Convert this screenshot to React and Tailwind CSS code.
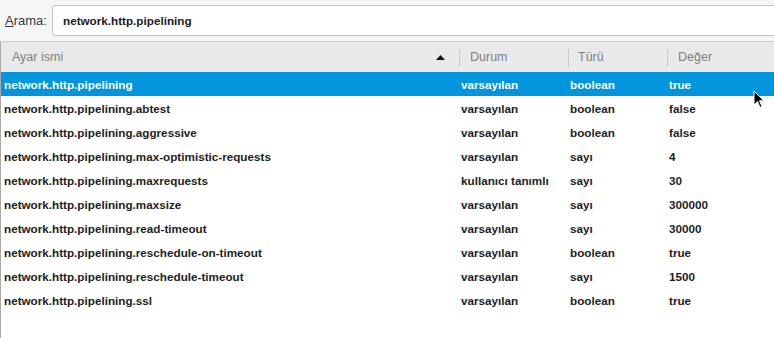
import React from "react";

const rows = [
  ["network.http.pipelining", "varsayılan", "boolean", "true"],
  ["network.http.pipelining.abtest", "varsayılan", "boolean", "false"],
  ["network.http.pipelining.aggressive", "varsayılan", "boolean", "false"],
  ["network.http.pipelining.max-optimistic-requests", "varsayılan", "sayı", "4"],
  ["network.http.pipelining.maxrequests", "kullanıcı tanımlı", "sayı", "30"],
  ["network.http.pipelining.maxsize", "varsayılan", "sayı", "300000"],
  ["network.http.pipelining.read-timeout", "varsayılan", "sayı", "30000"],
  ["network.http.pipelining.reschedule-on-timeout", "varsayılan", "boolean", "true"],
  ["network.http.pipelining.reschedule-timeout", "varsayılan", "sayı", "1500"],
  ["network.http.pipelining.ssl", "varsayılan", "boolean", "true"],
];

export default function App() {
  return (
    <div
      className="w-[774px] h-[338px] overflow-hidden bg-white relative text-[11.7px] font-bold"
      style={{ fontFamily: '"Liberation Sans", Arial, sans-serif' }}
    >
      <div className="h-[42px] bg-[#f6f6f6] flex items-center pl-[5px] border-b border-[#cdcdcd]">
        <span className="text-[#3a3a3a] font-normal text-[13px] w-[47px]">
          <u>A</u>rama:
        </span>
        <div className="flex-1 h-[31px] mr-[-10px] bg-white border border-[#c4c4c4] rounded-l-[3px] flex items-center pl-[10px] pt-[1px] text-[#1c1c1c]">
          network.http.pipelining
        </div>
      </div>
      <div className="border-l border-[#a9a9a9] h-[296px]">
        <div className="h-[30px] bg-[#e9e9e9] flex items-center text-[#7f7f7f] font-normal text-[12.5px] pt-[1px]">
          <div className="w-[458px] flex items-center pl-[11px] pr-[14px] justify-between">
            <span>Ayar ismi</span>
            <svg width="9" height="5" viewBox="0 0 9 5"><path d="M0 5 L4.5 0 L9 5 Z" fill="#111" /></svg>
          </div>
          <div className="w-px h-[18px] bg-[#cbcbcb]" />
          <div className="w-[108px] pl-[10px]">Durum</div>
          <div className="w-px h-[18px] bg-[#cbcbcb]" />
          <div className="w-[98px] pl-[9px]">Türü</div>
          <div className="w-px h-[18px] bg-[#cbcbcb]" />
          <div className="flex-1 pl-[10px]">Değer</div>
        </div>
        {rows.map((r, i) => (
          <div
            key={i}
            className={
              "h-[24px] flex items-center pt-[2px] " +
              (i === 0 ? "bg-[#0095dd] text-white" : "text-[#1e1e1e]")
            }
          >
            <div className="w-[459px] pl-[3px]">{r[0]}</div>
            <div className="w-[109px] pl-[1px]">{r[1]}</div>
            <div className="w-[99px] pl-[1px]">{r[2]}</div>
            <div className="flex-1 pl-[1px]">{r[3]}</div>
          </div>
        ))}
      </div>
      <svg
        className="absolute left-[753px] top-[90px]"
        width="12"
        height="19"
        viewBox="0 0 12 19"
      >
        <path d="M1 1 L1 15 L4.5 11.5 L7 17.5 L9 16.5 L6.5 10.8 L11 10.8 Z" fill="#000" stroke="#fff" strokeWidth="1" />
      </svg>
    </div>
  );
}
